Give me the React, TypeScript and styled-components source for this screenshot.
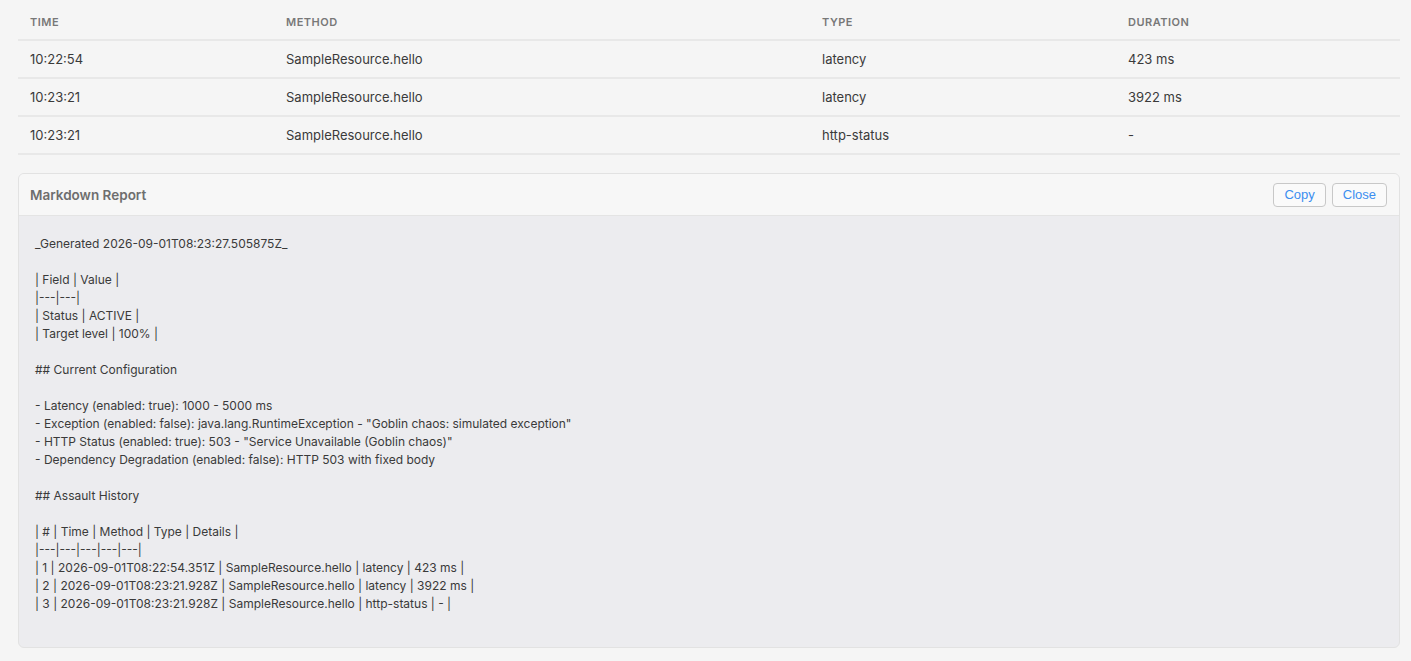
import * as React from 'react';
import styled, { createGlobalStyle } from 'styled-components';

const GlobalStyle = createGlobalStyle`
	body {
		margin: 0;
		background: #f5f5f5;
		font-family: Inter, "Noto Sans", sans-serif;
		color: #333;
	}
`;

const Page = styled.div`
	padding: 0 11px 14px 18px;
`;

const Table = styled.table`
	width: 100%;
	border-collapse: collapse;
	font-size: 13px;
	color: #3a3a3a;
`;

const Th = styled.th<{ $w: number }>`
	width: ${(p) => p.$w}px;
	height: 40px;
	padding: 4px 12px 0;
	text-align: left;
	font-size: 11px;
	font-weight: 600;
	letter-spacing: 0.5px;
	text-transform: uppercase;
	color: #787878;
	border-bottom: 2px solid #e8e8e8;
	box-sizing: border-box;
`;

const Td = styled.td`
	height: 38px;
	padding: 0 12px;
	border-bottom: 2px solid #e8e8e8;
	box-sizing: border-box;
`;

const Panel = styled.section`
	margin-top: 18px;
	border: 1px solid #e2e2e2;
	border-radius: 6px;
	overflow: hidden;
	background: #ececef;
`;

const PanelHeader = styled.div`
	height: 41px;
	display: flex;
	align-items: center;
	justify-content: space-between;
	padding: 0 12px 0 11px;
	background: #f7f7f7;
	border-bottom: 1px solid #e4e4e4;
`;

const PanelTitle = styled.h3`
	margin: 0;
	font-size: 13.5px;
	font-weight: 600;
	color: #6e6e6e;
`;

const Actions = styled.div`
	display: flex;
	gap: 6px;
`;

const Button = styled.button`
	height: 24px;
	padding: 0 10px;
	background: #fafafa;
	border: 1px solid #c8c8c8;
	border-radius: 4px;
	color: #3b8ef0;
	font-family: "Liberation Sans", Arial, sans-serif;
	font-size: 13px;
	cursor: pointer;
`;

const Report = styled.pre`
	margin: 0;
	padding: 19px 16px 34px;
	font-family: Inter, "Noto Sans", sans-serif;
	font-size: 12px;
	line-height: 18px;
	color: #3a3a3a;
	white-space: pre-wrap;
`;

const columns = [
	{ key: 'time', label: 'Time', width: 256 },
	{ key: 'method', label: 'Method', width: 536 },
	{ key: 'type', label: 'Type', width: 306 },
	{ key: 'duration', label: 'Duration', width: 284 },
];

const rows = [
	{ time: '10:22:54', method: 'SampleResource.hello', type: 'latency', duration: '423 ms' },
	{ time: '10:23:21', method: 'SampleResource.hello', type: 'latency', duration: '3922 ms' },
	{ time: '10:23:21', method: 'SampleResource.hello', type: 'http-status', duration: '-' },
];

const report = `_Generated 2026-09-01T08:23:27.505875Z_

| Field | Value |
|---|---|
| Status | ACTIVE |
| Target level | 100% |

## Current Configuration

- Latency (enabled: true): 1000 - 5000 ms
- Exception (enabled: false): java.lang.RuntimeException - "Goblin chaos: simulated exception"
- HTTP Status (enabled: true): 503 - "Service Unavailable (Goblin chaos)"
- Dependency Degradation (enabled: false): HTTP 503 with fixed body

## Assault History

| # | Time | Method | Type | Details |
|---|---|---|---|---|
| 1 | 2026-09-01T08:22:54.351Z | SampleResource.hello | latency | 423 ms |
| 2 | 2026-09-01T08:23:21.928Z | SampleResource.hello | latency | 3922 ms |
| 3 | 2026-09-01T08:23:21.928Z | SampleResource.hello | http-status | - |`;

const App = () => {
	return (
		<Page>
			<GlobalStyle />
			{/* assault log */}
			<Table>
				<thead>
					<tr>
						{columns.map((c) => (
							<Th key={c.key} $w={c.width}>
								{c.label}
							</Th>
						))}
					</tr>
				</thead>
				<tbody>
					{rows.map((r, i) => (
						<tr key={i}>
							<Td>{r.time}</Td>
							<Td>{r.method}</Td>
							<Td>{r.type}</Td>
							<Td>{r.duration}</Td>
						</tr>
					))}
				</tbody>
			</Table>
			{/* markdown report */}
			<Panel>
				<PanelHeader>
					<PanelTitle>Markdown Report</PanelTitle>
					<Actions>
						<Button>Copy</Button>
						<Button>Close</Button>
					</Actions>
				</PanelHeader>
				<Report>{report}</Report>
			</Panel>
		</Page>
	);
};

export default App;
